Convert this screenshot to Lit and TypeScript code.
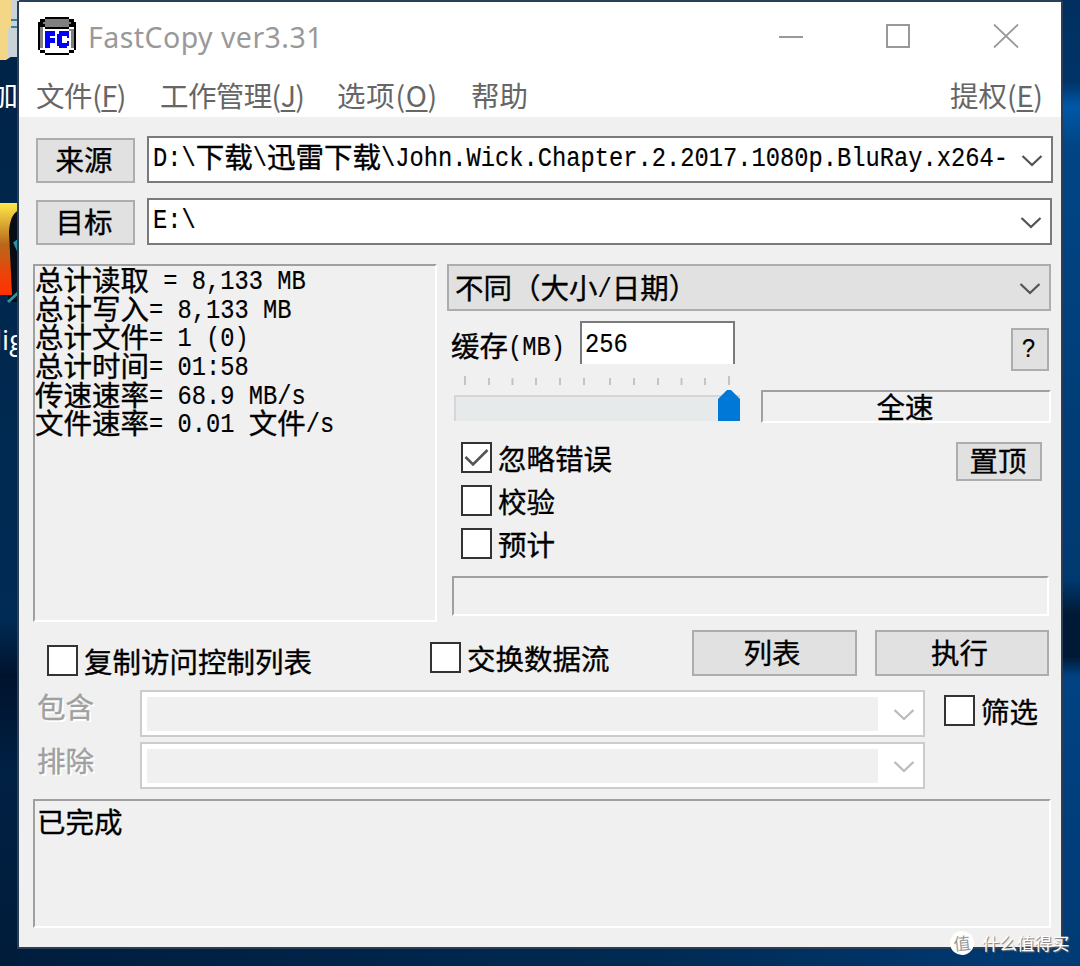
import { LitElement, html, css, svg } from "lit";
import { customElement, property } from "lit/decorators.js";

const chevron = html`<svg class="chev" width="22" height="14" viewBox="0 0 22 14"><path d="M1.5 2 L11 11 L20.5 2" fill="none" stroke="currentColor" stroke-width="2.3"/></svg>`;

/* Full-width characters take one em, all others half an em. */
@customElement("cell-text")
class CellText extends LitElement {
  @property() text = "";
  static styles = css`
    :host { display: inline-block; white-space: pre; font: 28.5px/28.67px "Noto Sans CJK SC", sans-serif; -webkit-text-stroke: 0.35px currentColor; }
    .half { display: inline-block; font: 23.75px/28px "Liberation Mono", monospace; transform: translateY(-2px) scaleY(1.2); transform-origin: 50% 76%; -webkit-text-stroke: 0.15px currentColor; }
  `;
  render() {
    const runs = this.text.match(/[\x20-\x7e]+|[^\x20-\x7e]+/g) ?? [];
    return html`${runs.map((r) => /^[\x20-\x7e]/.test(r) ? html`<span class="half">${r}</span>` : r)}`;
  }
}

@customElement("check-item")
class CheckItem extends LitElement {
  @property() label = "";
  @property({ type: Boolean }) checked = false;
  static styles = css`
    :host { display: flex; align-items: flex-start; gap: 6px; height: 31px; }
    .box { box-sizing: border-box; width: 31px; height: 31px; border: 2px solid #333; background: #fff; flex: none; }
    svg { display: block; }
    cell-text { margin-top: 2px; }
  `;
  render() {
    return html`<div class="box">${this.checked ? html`<svg width="27" height="27" viewBox="0 0 27 27"><path d="M2.5 13 L10 20.5 L24.5 6" fill="none" stroke="#555" stroke-width="2.6"/></svg>` : ""}</div><cell-text .text=${this.label}></cell-text>`;
  }
}

@customElement("app-root")
class AppRoot extends LitElement {
  static styles = css`
    :host { display: block; position: relative; width: 1080px; height: 966px; overflow: hidden; color: #000;
      background: linear-gradient(90deg, #002248, #002d5c 40%, #003a72); }
    * { box-sizing: border-box; }
    svg { display: block; }
    .desk { position: absolute; inset: 0; }
    .cap { position: absolute; color: #fff; white-space: nowrap; font: 28px/30px "Noto Sans CJK SC", sans-serif; }
    .cap1 { left: -10px; top: 79px; }
    .cap2 { left: -5px; top: 324px; font-family: "Open Sans", sans-serif; }
    .win { position: absolute; left: 17px; top: 1px; width: 1046px; height: 948px; border: 2px solid #2a3f55; border-top-width: 1px; background: #f0f0f0; overflow: hidden; }
    .top { background: #fff; height: 115px; }
    .title { display: flex; height: 69px; padding: 15px 42px 0 19px; }
    .name { margin: 3px 0 0 12px; font: 28.5px/34px "Noto Sans", sans-serif; letter-spacing: 0.45px; color: #999; flex: 1; white-space: nowrap; }
    .ctl { display: flex; gap: 83px; padding-top: 7px; }
    .menu { display: flex; padding: 5px 18px 0 17px; font: 28.5px/38px "Noto Sans CJK SC", sans-serif; color: #666; white-space: nowrap; }
    .menu span { flex: none; }
    .menu .grow { flex: 1; }
    .m1 { width: 124px; letter-spacing: -0.4px; } .m2 { width: 177px; letter-spacing: -0.6px; } .m3 { width: 134px; letter-spacing: 0.7px; }
    .menu u { text-decoration-thickness: 2px; text-underline-offset: 3px; }
    .body { padding: 19px 8px 0 14px; display: flex; flex-direction: column; }
    .btn { display: flex; align-items: center; justify-content: center; border: 2px solid #adadad; background: #e1e1e1; }
    .row { display: flex; }
    .path { padding-left: 3px; height: 47px; gap: 12px; align-items: flex-start; }
    .path .btn { width: 99px; height: 45px; margin-top: 2px; padding: 0 3px 3px 0; }
    .path + .path { margin-top: 15px; }
    .combo { display: flex; align-items: center; justify-content: space-between; height: 47px; border: 2px solid #7a7a7a; background: #fff; color: #000; padding: 0 8px 0 4px; }
    .chev { color: #555; margin-top: 3px; flex: none; }
    .c1 { width: 907px; } .c2 { width: 905px; }
    .c1 cell-text { margin-top: -1px; } .c2 cell-text { margin-top: -2px; }
    .mid { margin-top: 19px; height: 358px; gap: 10px; }
    .sunk { border: 2px solid; border-color: #a0a0a0 #fff #fff #a0a0a0; }
    .stats { width: 404px; display: flex; flex-direction: column; }
    .stats cell-text { height: 28.67px; margin-top: -1px; margin-bottom: 1px; }
    .opts { width: 606px; }
    .mode { width: 604px; background: #e1e1e1; border-color: #adadad; padding-left: 6px; }
    .mode cell-text { margin-top: 5px; }
    .cache { height: 60px; padding: 10px 0 0 4px; }
    .cache .lbl { width: 129px; padding-top: 10px; }
    .inp { width: 155px; height: 43px; border: 2px solid #7a7a7a; border-bottom: 0; background: #fff; padding: 5px 0 0 3px; }
    .help { width: 38px; height: 43px; margin: 7px 0 0 276px; padding-right: 2px; }
    .speed { height: 60px; padding: 3px 0 0 7px; }
    .speed .sunk { width: 290px; height: 33px; margin: 16px 0 0 20px; text-align: center; padding-right: 2px; }
    .checks { height: 126px; padding: 11px 11px 0 14px; justify-content: space-between; }
    .list { display: flex; flex-direction: column; gap: 12px; }
    .pin { width: 86px; height: 39px; padding-right: 2px; }
    .pin cell-text { margin-top: -2px; }
    .bar { width: 597px; height: 40px; margin: 19px 0 0 5px; }
    .acts { height: 61px; padding: 8px 0 0 14px; }
    .acts .a { width: 383px; margin-top: 15px; } .acts .b { width: 262px; margin-top: 12px; }
    .acts .btn { height: 46px; padding: 0 5px 1px 0; }
    .x1 { width: 165px; margin-right: 18px; } .x2 { width: 174px; }
    .filter { height: 47px; padding-left: 5px; margin-top: 7px; }
    .filter + .filter { margin-top: 5px; }
    .filter .lbl { width: 102px; color: #a0a0a0; text-shadow: 2px 2px 0 #fff; padding-top: 2px; margin-left: -1px; margin-right: 1px; }
    .filter + .filter .lbl { padding-top: 4px; }
    .off { width: 785px; border-color: #ccc; padding: 0 8px 0 5px; }
    .off .in { width: 731px; height: 34px; background: #f0f0f0; }
    .off .chev { color: #bbb; }
    .filter check-item { margin: 5px 0 0 19px; }
    .log { height: 129px; width: 1018px; margin-top: 10px; padding: 6px 0 0 2px; }
    .mark { position: absolute; left: 950px; top: 931px; display: flex; gap: 8px; align-items: center; color: #fff; font: 17.5px/24px "Noto Sans CJK SC", sans-serif; text-shadow: 1px 1px 1px #777; white-space: nowrap; }
    .dot { width: 24px; height: 24px; border-radius: 50%; background: #fff; color: #999; text-align: center; font-size: 17px; line-height: 23px; text-shadow: none; transform: rotate(-6deg); }
  `;

  ticks = [465, 489, 512.5, 536, 560, 584, 610, 634, 658, 681.5, 705, 729];
  stats = ["总计读取 = 8,133 MB", "总计写入= 8,133 MB", "总计文件= 1 (0)", "总计时间= 01:58", "传速速率= 68.9 MB/s", "文件速率= 0.01 文件/s"];

  render() {
    return html`
      <svg class="desk" width="1080" height="966">
        <defs>
          <linearGradient id="l" x2="0" y2="1"><stop offset="0" stop-color="#002347"/><stop offset=".5" stop-color="#002a52"/><stop offset=".64" stop-color="#002b55"/><stop offset=".7" stop-color="#00132d"/><stop offset=".8" stop-color="#002044"/><stop offset="1" stop-color="#001c3a"/></linearGradient>
          <linearGradient id="r" x2="0" y2="1"><stop offset="0" stop-color="#002f60"/><stop offset=".085" stop-color="#003468"/><stop offset=".11" stop-color="#0058a8"/><stop offset=".15" stop-color="#004585"/><stop offset=".6" stop-color="#003970"/><stop offset=".635" stop-color="#001a36"/><stop offset=".68" stop-color="#001a36"/><stop offset=".7" stop-color="#004282"/><stop offset="1" stop-color="#003b75"/></linearGradient>
          <linearGradient id="g" x2="0" y2="1"><stop offset="0" stop-color="#ffe94a"/><stop offset=".45" stop-color="#b8681c"/><stop offset=".8" stop-color="#f04008"/><stop offset="1" stop-color="#ff3000"/></linearGradient>
          <linearGradient id="b"><stop offset="0" stop-color="#001d3d"/><stop offset=".6" stop-color="#002a52"/><stop offset="1" stop-color="#003b75"/></linearGradient>
        </defs>
        <rect width="19" height="966" fill="url(#l)"/>
        <rect x="1061" width="19" height="966" fill="url(#r)"/>
        <rect x="19" y="947" width="1042" height="19" fill="url(#b)"/>
        <rect x="19" width="1042" height="3" fill="#29415e"/>
        <path d="M0 0H12V56L6 60H0Z" fill="#f3d787"/><path d="M11 0H19V57H8V30L11 26Z" fill="#c9d3d8"/><path d="M11 20H19M11 27H19" stroke="#3f7fa5" stroke-width="2"/>
        <path d="M8 204H19V302H8Z" fill="#080c14"/><path d="M0 203H19V210Q10 214 9 232L12 295H0Z" fill="url(#g)"/><path d="M19 240L15 243L19 252M8 302L19 292" stroke="#2f93a5" stroke-width="3" fill="none"/>
      </svg>
      <div class="cap cap1">加</div><div class="cap cap2">lig</div>
      <div class="win">
        <div class="top">
          <div class="title">
            <svg width="38" height="38" viewBox="0 0 16 16" shape-rendering="crispEdges">
              <path d="M3 0H13V1H15V2H16V14H15V15H13V16H3V15H1V14H0V2H1V1H3Z" fill="#000"/>
              <path d="M1 3H15V14H13V15H3V14H1Z" fill="#fff"/>
              <path d="M3 1H13V2H14V3H13V4H3V3H2V2H3ZM1 4H2V13H1ZM13 5H15V13H14V6H13Z" fill="#808080"/>
              <path d="M1 3H3V4H13V3H15V4H13V5H3V4H1Z" fill="#000"/>
              <path d="M3 6H7V8H5V9H7V11H5V13H3ZM9 6H13V9H12V8H10V11H12V10H13V12H12V13H9V12H8V7H9Z" fill="#00f"/>
            </svg>
            <div class="name">FastCopy ver3.31</div>
            <div class="ctl">
              <svg width="24" height="24"><path d="M0 13H24" stroke="#999" stroke-width="2"/></svg>
              <svg width="24" height="24"><rect x="1" y="1" width="22" height="22" fill="none" stroke="#999" stroke-width="2"/></svg>
              <svg width="26" height="24"><path d="M1 0.5L25 23.5M25 0.5L1 23.5" stroke="#999" stroke-width="1.8"/></svg>
            </div>
          </div>
          <div class="menu">
            <span class="m1">文件(<u>F</u>)</span><span class="m2">工作管理(<u>J</u>)</span><span class="m3">选项(<u>O</u>)</span><span class="grow">帮助</span><span>提权(<u>E</u>)</span>
          </div>
        </div>
        <div class="body">
          <div class="row path"><div class="btn"><cell-text text="来源"></cell-text></div><div class="combo c1"><cell-text .text=${"D:\\下载\\迅雷下载\\John.Wick.Chapter.2.2017.1080p.BluRay.x264-"}></cell-text>${chevron}</div></div>
          <div class="row path"><div class="btn"><cell-text text="目标"></cell-text></div><div class="combo c2"><cell-text .text=${"E:\\"}></cell-text>${chevron}</div></div>
          <div class="row mid">
            <div class="stats sunk">${this.stats.map((s) => html`<cell-text .text=${s}></cell-text>`)}</div>
            <div class="opts">
              <div class="combo mode"><cell-text text="不同（大小/日期）"></cell-text>${chevron}</div>
              <div class="row cache"><div class="lbl"><cell-text text="缓存(MB)"></cell-text></div><div class="inp"><cell-text text="256"></cell-text></div><div class="btn help"><cell-text text="?"></cell-text></div></div>
              <div class="row speed">
                <svg width="287" height="50" viewBox="454 374 287 50">
                  ${this.ticks.map((x, i) => svg`<path d="M${x} ${i % 11 ? 378 : 376}V385" stroke="#c4c4c4" stroke-width="2"/>`)}
                  <rect x="454" y="395" width="286" height="26" fill="#d6d6d6"/><rect x="456" y="397" width="284" height="24" fill="#e7eaea"/>
                  <path d="M718 421V399L727 390H731L740 399V421Z" fill="#0078d7"/>
                </svg>
                <div class="sunk"><cell-text text="全速"></cell-text></div>
              </div>
              <div class="row checks">
                <div class="list"><check-item label="忽略错误" checked></check-item><check-item label="校验"></check-item><check-item label="预计"></check-item></div>
                <div class="btn pin"><cell-text text="置顶"></cell-text></div>
              </div>
              <div class="bar sunk"></div>
            </div>
          </div>
          <div class="row acts">
            <check-item class="a" label="复制访问控制列表"></check-item><check-item class="b" label="交换数据流"></check-item>
            <div class="btn x1"><cell-text text="列表"></cell-text></div><div class="btn x2"><cell-text text="执行"></cell-text></div>
          </div>
          <div class="row filter"><div class="lbl"><cell-text text="包含"></cell-text></div><div class="combo off"><div class="in"></div>${chevron}</div><check-item label="筛选"></check-item></div>
          <div class="row filter"><div class="lbl"><cell-text text="排除"></cell-text></div><div class="combo off"><div class="in"></div>${chevron}</div></div>
          <div class="log sunk"><cell-text text="已完成"></cell-text></div>
        </div>
      </div>
      <div class="mark"><div class="dot">值</div><span>什么值得买</span></div>
    `;
  }
}
